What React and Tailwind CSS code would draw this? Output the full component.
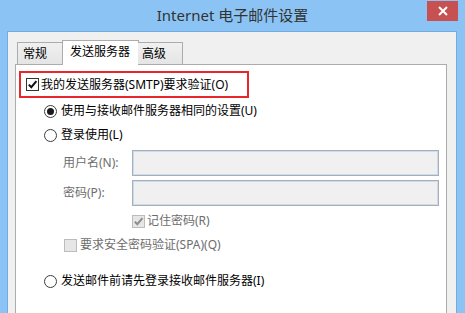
import React from "react";

const FONT = "font-['Noto_Sans','Noto_Sans_CJK_SC',sans-serif]";

function CheckBox({ checked, disabled }) {
  return (
    <span
      className={
        "w-[13px] h-[13px] shrink-0 border flex items-center justify-center " +
        (disabled ? "border-[#bcbcbc] bg-[#e6e6e6]" : "border-[#333333] bg-white")
      }
    >
      {checked && (
        <svg width="11" height="11" viewBox="0 0 11 11">
          <path
            d="M1.8 5.6 L4.3 8.2 L9.4 2.2"
            fill="none"
            stroke={disabled ? "#8d8d8d" : "#111111"}
            strokeWidth="2"
          />
        </svg>
      )}
    </span>
  );
}

function Radio({ checked }) {
  return (
    <span className="w-[13px] h-[13px] shrink-0 rounded-full border border-[#3c3c3c] bg-white flex items-center justify-center">
      {checked && <span className="w-[7px] h-[7px] rounded-full bg-[#1a1a1a]" />}
    </span>
  );
}

function Input() {
  return (
    <div className="w-[307px] h-[26px] border border-[#a6aeb8] bg-[#f0f0f0] shadow-[inset_0_0_0_1px_#cddbeb]" />
  );
}

export default function App() {
  return (
    <div className={"w-[465px] h-[313px] bg-[#8bc4f4] overflow-hidden relative " + FONT}>
      {/* title bar */}
      <div className="h-[31px] flex items-center justify-center text-[15px] text-[#333333] pb-[1px]">
        Internet 电子邮件设置
      </div>
      <div className="absolute left-[427px] top-[1px] w-[31px] h-[20px] bg-[#c75050] flex items-center justify-center">
        <svg width="10" height="10" viewBox="0 0 10 10">
          <path d="M1 1 L9 9 M9 1 L1 9" stroke="#ffffff" strokeWidth="2" />
        </svg>
      </div>

      {/* client area */}
      <div className="ml-[7px] w-[450px] h-[282px] border-l border-t border-r border-[#72abe2] bg-[#f0f0f0] pl-[7px] pr-[9px] pt-[8px]">
        {/* tabs */}
        <div className="flex items-end h-[24px] ml-[2px] relative z-10 text-[12px] text-black">
          <div className="w-[46px] h-[22px] border-l border-t border-r border-[#acacac] bg-gradient-to-b from-[#f0f0f0] to-[#e5e5e5] flex items-center pl-[5px] pt-[1px]">
            常规
          </div>
          <div className="w-[77px] h-[25px] -mb-px -ml-px border-l border-t border-r border-[#acacac] bg-white flex items-center pl-[7px] pb-[2px]">
            发送服务器
          </div>
          <div className="w-[45px] h-[22px] -ml-px border-t border-r border-[#acacac] bg-gradient-to-b from-[#f0f0f0] to-[#e5e5e5] flex items-center pl-[4px] pt-[1px]">
            高级
          </div>
        </div>

        {/* panel */}
        <div className="w-[432px] h-[260px] border border-[#acacac] bg-white text-[12px] text-black flex flex-col">
          <div className="mt-[6px] ml-[3px] w-[230px] h-[27px] border-2 border-[#e8262c] flex items-center pl-[5px] gap-[2px]">
            <CheckBox checked />
            <span>我的发送服务器(SMTP)要求验证(O)</span>
          </div>

          <div className="mt-[3px] h-[20px] pl-[28px] flex items-center gap-[4px]">
            <Radio checked />
            <span>使用与接收邮件服务器相同的设置(U)</span>
          </div>

          <div className="mt-[4px] h-[20px] pl-[28px] flex items-center gap-[4px]">
            <Radio />
            <span>登录使用(L)</span>
          </div>

          <div className="mt-[5px] h-[26px] pl-[47px] flex items-center">
            <span className="w-[69px] text-[#6d6d6d]">用户名(N):</span>
            <Input />
          </div>

          <div className="mt-[4px] h-[26px] pl-[47px] flex items-center">
            <span className="w-[69px] text-[#6d6d6d]">密码(P):</span>
            <Input />
          </div>

          <div className="mt-[5px] h-[20px] pl-[116px] flex items-center gap-[2px]">
            <CheckBox checked disabled />
            <span className="text-[#6d6d6d]">记住密码(R)</span>
          </div>

          <div className="mt-[4px] h-[20px] pl-[48px] flex items-center gap-[3px]">
            <CheckBox disabled />
            <span className="text-[#6d6d6d]">要求安全密码验证(SPA)(Q)</span>
          </div>

          <div className="mt-[16px] h-[20px] pl-[28px] flex items-center gap-[4px]">
            <Radio />
            <span>发送邮件前请先登录接收邮件服务器(I)</span>
          </div>
        </div>
      </div>
    </div>
  );
}
